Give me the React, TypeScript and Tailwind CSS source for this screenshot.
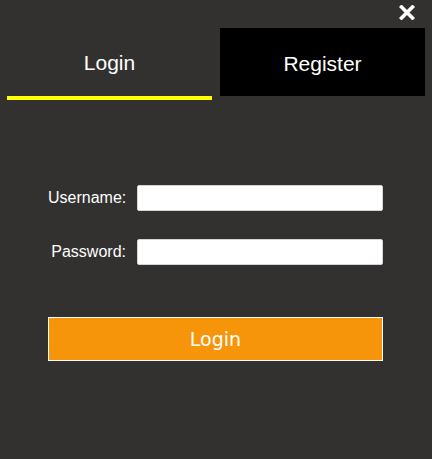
import { useState } from 'react';

export default function App() {
  const [tab, setTab] = useState<'login' | 'register'>('login');

  return (
    <div className="w-[432px] h-[459px] bg-[#32312f] font-['Liberation_Sans',Arial,sans-serif] text-white">
      {/* Close */}
      <div className="flex justify-end h-[28px] pr-[17px] pt-[5px]">
        <button className="w-[16px] h-[15px] flex items-center justify-center">
          <svg width="16" height="15" viewBox="0 0 16 15">
            <path d="M2.5 2 L13.5 13 M13.5 2 L2.5 13" stroke="#fff" strokeWidth="3.6" strokeLinecap="square" />
          </svg>
        </button>
      </div>

      {/* Tabs */}
      <div className="flex gap-[8px] px-[7px]">
        <button
          onClick={() => setTab('login')}
          className={`w-[205px] h-[72px] flex items-center justify-center pt-[2px] text-[21px] border-b-[4px] ${
            tab === 'login' ? 'border-[#ffff00] bg-transparent' : 'border-transparent bg-black'
          }`}
        >
          Login
        </button>
        <button
          onClick={() => setTab('register')}
          className={`w-[205px] h-[68px] flex items-center justify-center pt-[3px] text-[21px] ${
            tab === 'register' ? 'border-b-[4px] border-[#ffff00]' : 'bg-black'
          }`}
        >
          Register
        </button>
      </div>

      {/* Form */}
      <div className="pl-[48px] pt-[85px]">
        <div className="flex items-center h-[26px]">
          <label className="w-[78px] text-right text-[16px]">Username:</label>
          <input className="ml-[11px] w-[246px] h-[26px] bg-white border border-[#d4d4d4] rounded-[2px] text-black px-1 outline-none" />
        </div>
        <div className="flex items-center h-[26px] mt-[28px]">
          <label className="w-[78px] text-right text-[16px]">Password:</label>
          <input type="password" className="ml-[11px] w-[246px] h-[26px] bg-white border border-[#d4d4d4] rounded-[2px] text-black px-1 outline-none" />
        </div>
        <button className="mt-[52px] w-[335px] h-[44px] bg-[#f7950a] border border-white text-[19px] font-['DejaVu_Sans',sans-serif] flex items-center justify-center">
          Login
        </button>
      </div>
    </div>
  );
}
